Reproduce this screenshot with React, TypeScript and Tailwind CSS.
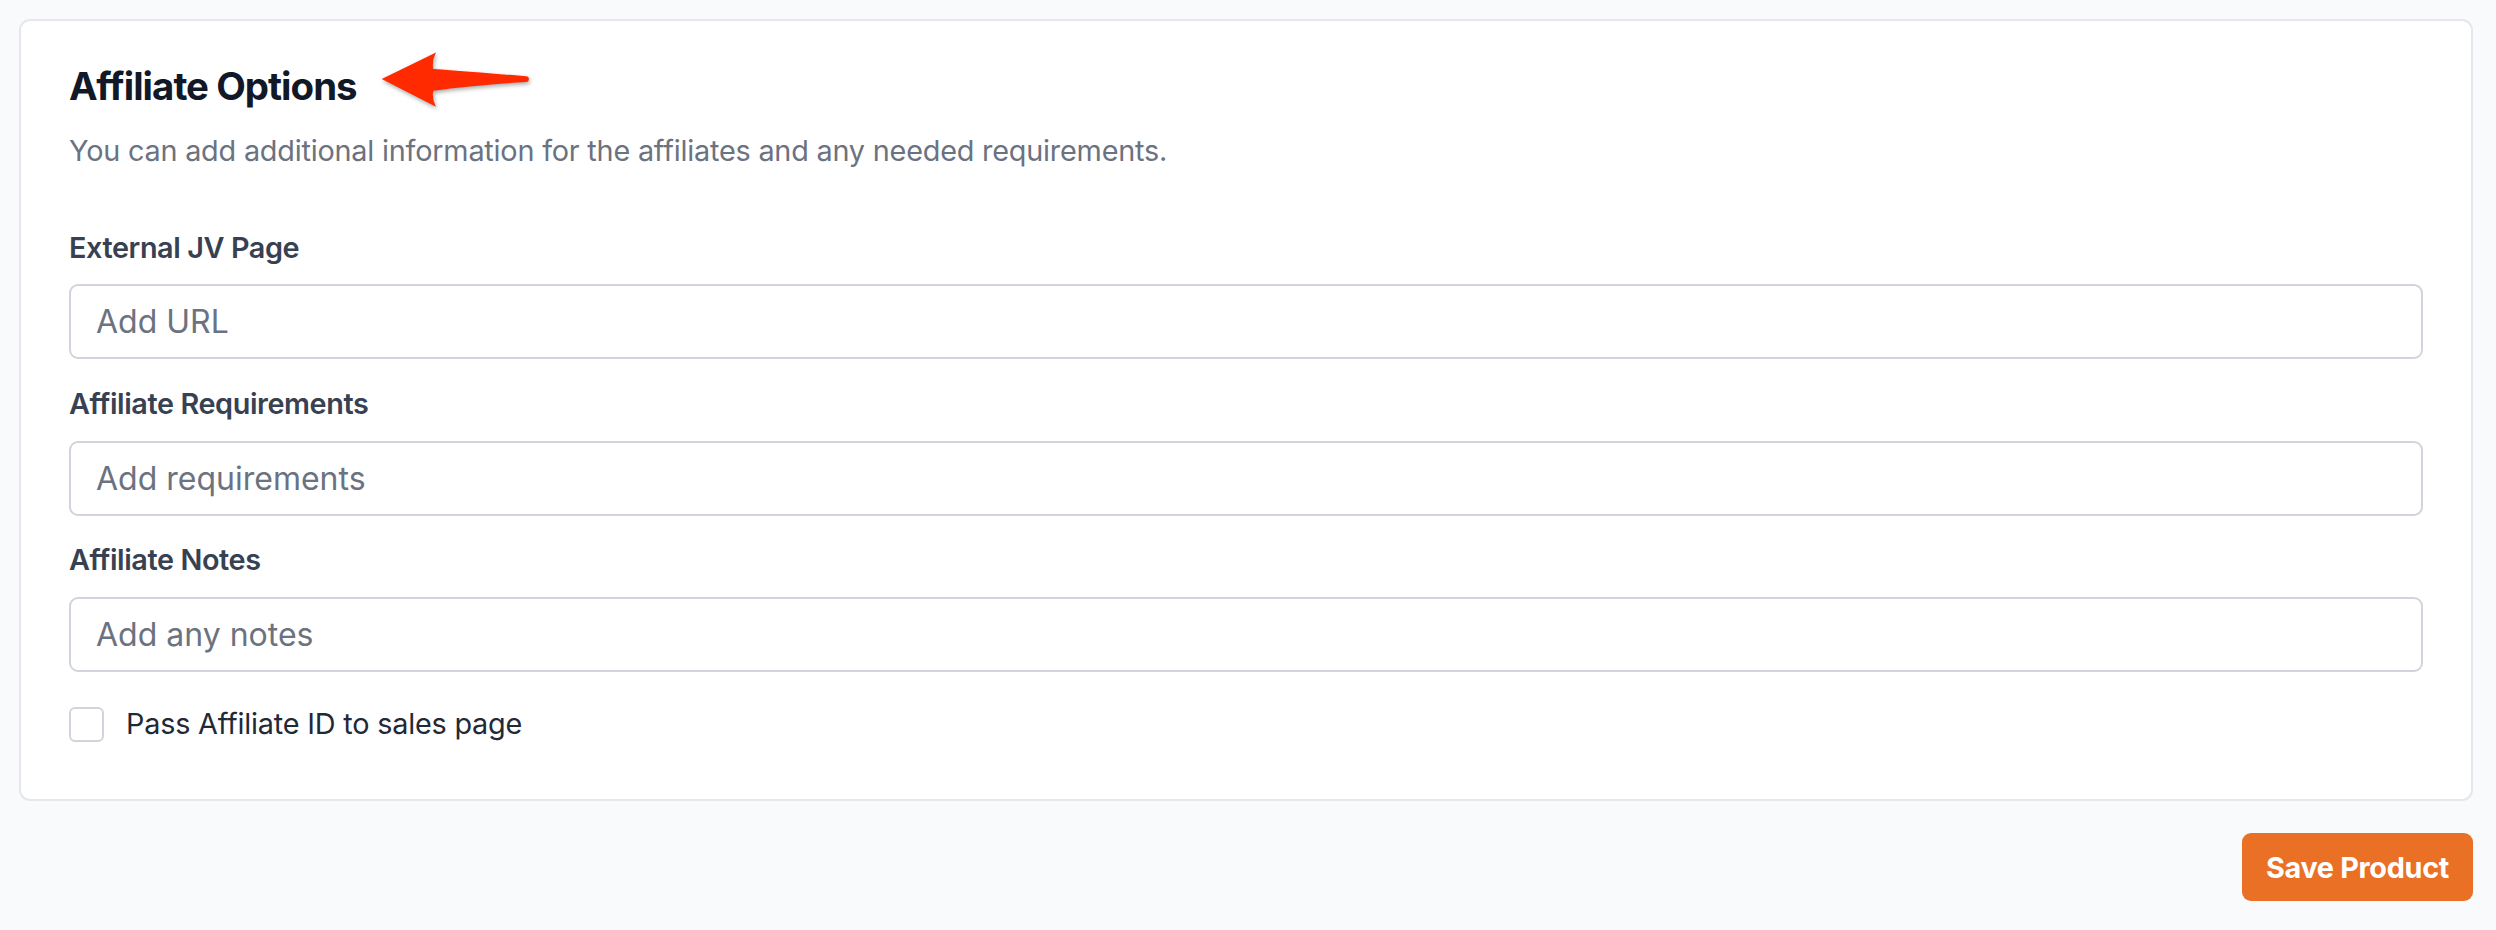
import React from "react";

function Field({ label, placeholder }: { label: string; placeholder: string }) {
  return (
    <div className="flex flex-col">
      <label className="text-[28.8px] leading-[44.8px] font-semibold tracking-[-0.4px] text-[#374151]">{label}</label>
      <input
        type="text"
        placeholder={placeholder}
        className="mt-[14px] h-[75px] w-full rounded-[9px] border-2 border-[#d1d5db] bg-white pl-[25px] pr-[25px] text-[32px] text-[#111827] outline-none placeholder:text-[#6b7280]"
      />
    </div>
  );
}

export default function App() {
  return (
    <div className="min-h-[930px] w-full bg-[#f9fafb] pl-[19px] pr-[23px] pt-[19px] font-[Inter,sans-serif]">
      <div className="rounded-[11px] border-2 border-[#e5e7eb] bg-white pl-[48px] pr-[48px] pt-[40px] pb-[52.5px]">
        <div className="relative">
          <h2 className="text-[38.4px] leading-[51.2px] font-bold tracking-[-0.96px] text-[#111827]">Affiliate Options</h2>
          <svg
            className="absolute left-[301px] top-[-17px] drop-shadow-[1px_2px_2px_rgba(0,0,0,0.35)]"
            width="170"
            height="75"
            viewBox="0 0 170 75"
          >
            <path
              d="M11.7 35 L66 8.5 Q61.5 17 63.3 25 Q98 27.5 156 32.2 A2.9 2.9 0 0 1 156 38 Q98 41.5 63.3 46.7 Q61.5 54 66 62.8 Z"
              fill="#ff2a00"
            />
          </svg>
        </div>
        <p className="mt-[17px] text-[28.8px] leading-[44.8px] tracking-[-0.2px] text-[#6b7280]">
          You can add additional information for the affiliates and any needed requirements.
        </p>
        <div className="mt-[51.5px] flex flex-col gap-[22.5px]">
          <Field label="External JV Page" placeholder="Add URL" />
          <Field label="Affiliate Requirements" placeholder="Add requirements" />
          <Field label="Affiliate Notes" placeholder="Add any notes" />
        </div>
        <label className="mt-[30px] flex h-[44.8px] items-center gap-[22px]">
          <span className="block h-[35px] w-[35px] rounded-[6px] border-2 border-[#d1d5db] bg-white" />
          <span className="text-[28.8px] leading-[44.8px] tracking-[-0.2px] text-[#1f2937]">Pass Affiliate ID to sales page</span>
        </label>
      </div>
      <div className="mt-[32px] flex justify-end">
        <button className="flex h-[68px] w-[231px] items-center justify-center rounded-[9px] bg-[#ea7026] text-[28.8px] font-bold tracking-[-0.3px] text-white">
          Save Product
        </button>
      </div>
    </div>
  );
}
